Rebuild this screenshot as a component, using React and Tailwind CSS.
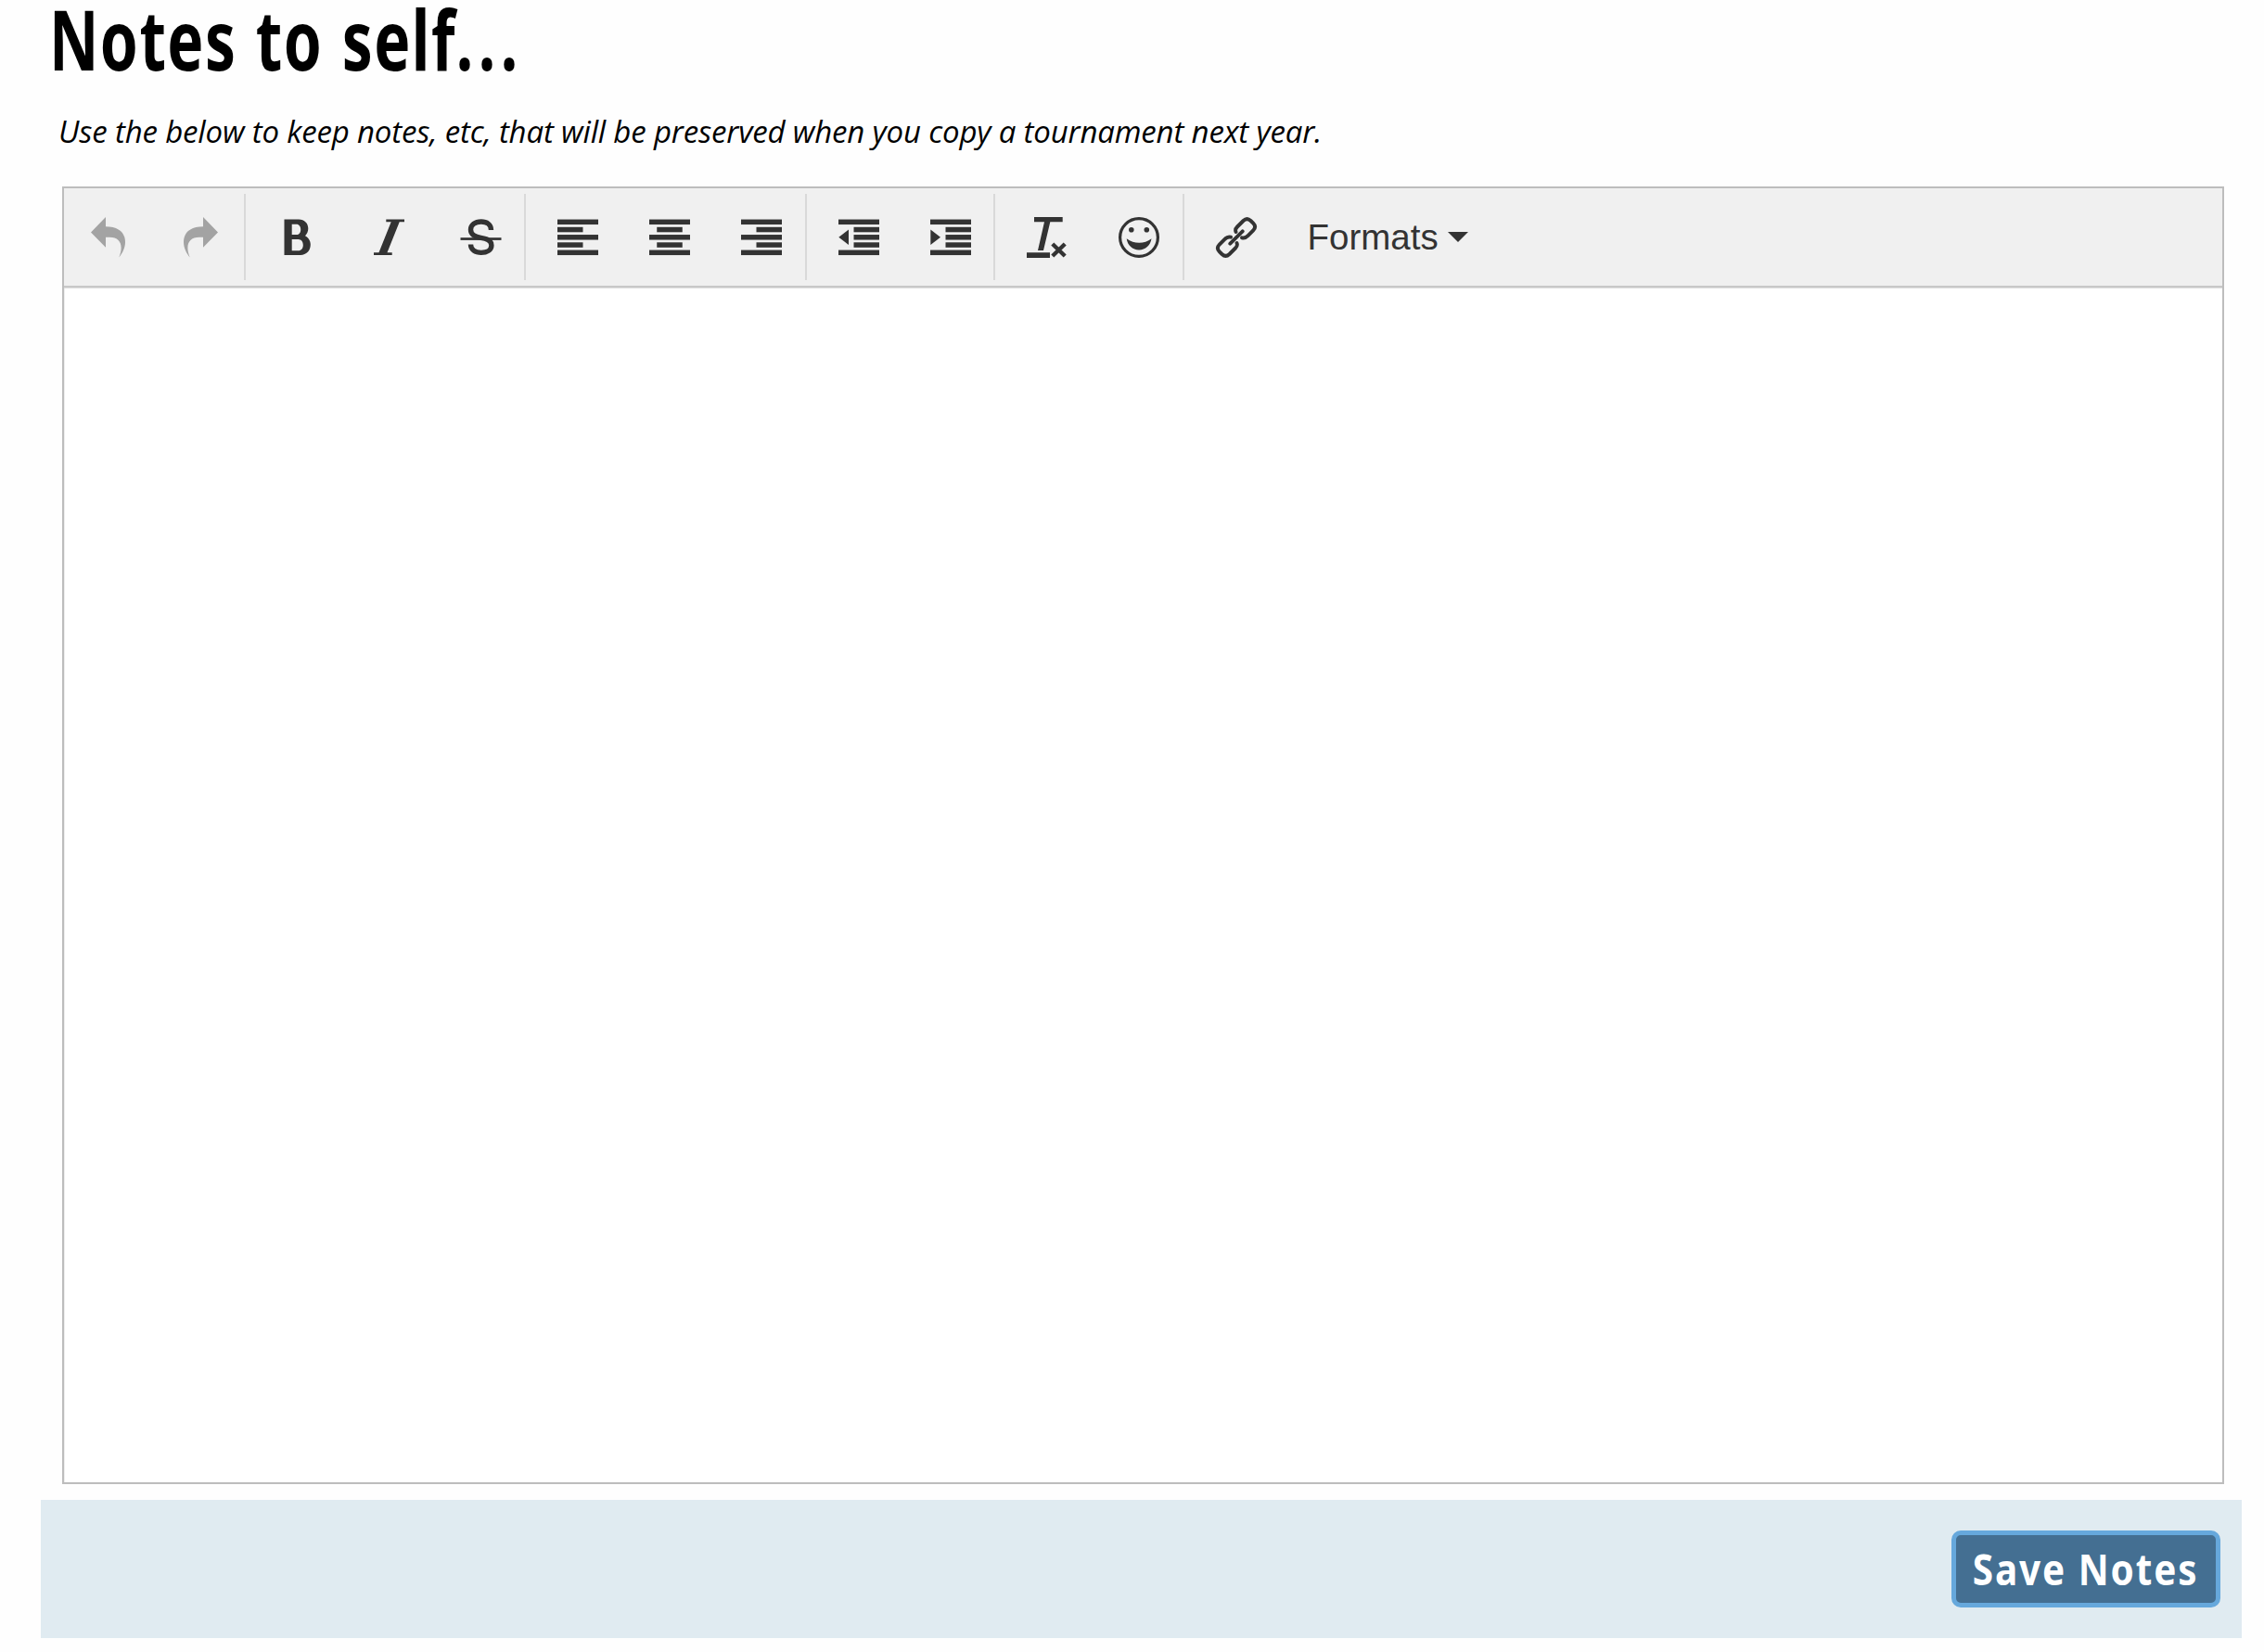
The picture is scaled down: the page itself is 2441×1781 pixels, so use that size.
import React from "react";

const Icon = ({ children, className = "text-[#333]" }) => (
  <button type="button" className={`block size-[44px] shrink-0 ${className}`}>
    <svg viewBox="0 0 44 44" className="block size-full overflow-visible" fill="currentColor">
      {children}
    </svg>
  </button>
);

const BAR_Y = [2.75, 11, 19.25, 27.5, 35.75];

// Five stacked text lines; `short` gives the left edge of the indented ones.
const Lines = ({ short, rows }) =>
  BAR_Y.map((y, i) => {
    const isShort = rows.includes(i);
    return <rect key={y} x={isShort ? short : 0} y={y - 0.2} width={isShort ? 27.5 : 44} height="5.5" />;
  });

const Group = ({ className, children }) => (
  <div className={`flex h-[93px] shrink-0 items-center gap-[55px] border-[#d9d9d9] ${className}`}>{children}</div>
);

const arrow = "M19 0V10.3C33 10.3 40 17 40 27C40 33 37 39 33.3 43.5C38 32 36 21.7 23 21.7H19V32.7L3 16.5Z";
const ring =
  "M21.5 16C20.4 13.5 21.3 12.2 23 10.5L29.5 4Q33.5 0.2 37.5 4L40.2 6.7Q44 10.5 40.2 14.5L34.5 20.2Q31.5 23.3 28 22.3";

export default function App() {
  return (
    <div className="flex h-[1781px] w-[2441px] flex-col bg-[#fefefe] font-['Open_Sans',sans-serif] text-black">
      <h1 className="h-[110px] pl-[53px] font-['Noto_Sans',sans-serif] text-[90px] leading-[82px] font-bold whitespace-nowrap">
        <span className="inline-block origin-left scale-x-[0.73] tracking-[2px] [word-spacing:2.5px]">
          Notes to self<span className="tracking-[7.5px]">...</span>
        </span>
      </h1>
      <p className="h-[91px] pl-[63px] text-[33px] leading-[64px] tracking-[-0.17px] whitespace-nowrap italic">
        Use the below to keep notes, etc, that will be preserved when you copy a tournament next year.
      </p>

      <section className="ml-[67px] flex h-[1399px] w-[2331px] flex-col border-2 border-[#bdbdbd] bg-white">
        <div className="flex h-[105px] shrink-0 items-center bg-[#f0f0f0]">
          <Group className="w-[196px] border-r-2 pl-[26px]">
            <Icon className="text-[#a3a3a3]">
              <path d={arrow} />
            </Icon>
            <Icon className="text-[#a3a3a3]">
              <path d={arrow} transform="matrix(-1 0 0 1 44 0)" />
            </Icon>
          </Group>
          <Group className="w-[302px] border-r-2 pl-[33px]">
            <Icon>
              <path
                fillRule="evenodd"
                d="M8.5 2.4H24C30.5 2.4 34.3 6.8 34.3 12.3C34.3 15.5 33 18.3 31 20.3C34.6 22.3 36.8 25.8 36.8 29.8C36.8 36.3 32.3 41 26 41H8.5ZM16.7 7.7V19H21.5C24.6 19 26.2 16.5 26.2 13.4C26.2 10.2 24.6 7.7 21.5 7.7ZM16.7 24V36.3H23.5C27 36.3 28.8 33.5 28.8 30.2C28.8 26.8 27 24 23.5 24Z"
              />
            </Icon>
            <Icon>
              <path d="M19.3 2.4H39V5.3H33.7L20.5 38.2H25.7V41H6V38.2H11.5L24.7 5.3H19.3Z" />
            </Icon>
            <Icon>
              <rect x="0.5" y="22.2" width="44" height="2.7" />
              <path
                transform="translate(0.5 0)"
                fill="none"
                stroke="currentColor"
                strokeWidth="5.4"
                d="M33 14C33 8 28.5 5 22.3 5C15.5 5 11 8.5 11 13.5C11 18.5 15 21.3 22 22.3C29.5 23.4 33.4 26 33.4 30.5C33.4 35.5 28.5 38.4 22.3 38.4C16 38.4 11 35.3 11 29.6"
              />
            </Icon>
          </Group>
          <Group className="w-[303px] border-r-2 pl-[34px]">
            <Icon><Lines short={0} rows={[1, 3]} /></Icon>
            <Icon><Lines short={8.25} rows={[1, 3]} /></Icon>
            <Icon><Lines short={16.5} rows={[1, 3]} /></Icon>
          </Group>
          <Group className="w-[203px] border-r-2 pl-[33.5px]">
            <Icon>
              <Lines short={16.5} rows={[1, 2, 3]} />
              <path d="M0.3 21.7L11 13.6V30Z" />
            </Icon>
            <Icon>
              <Lines short={16.5} rows={[1, 2, 3]} />
              <path d="M11 21.7L0.3 13.6V30Z" />
            </Icon>
          </Group>
          <Group className="w-[204px] border-r-2 pl-[34px]">
            <Icon>
              <path d="M8 0H38.7V5.3H25.3L18 36H12L19 5.3H8ZM0 38.3H25V44H0Z" />
              <path fill="none" stroke="currentColor" strokeWidth="4.4" d="M27.8 29L41.2 42M41.2 29L27.8 42" />
            </Icon>
            <Icon>
              <circle cx="22" cy="22" r="20.4" fill="none" stroke="currentColor" strokeWidth="3.2" />
              <circle cx="13.8" cy="13.8" r="2.8" />
              <circle cx="30.3" cy="13.8" r="2.8" />
              <path d="M8.7 23.3Q15 27.8 22.2 27.8T35.5 23.3C34.5 30.5 29 35.4 22.1 35.4S9.5 30.5 8.7 23.3Z" />
            </Icon>
          </Group>
          <div className="flex h-[93px] items-center pl-[33.5px]">
            <Icon>
              <g fill="none" stroke="currentColor" strokeWidth="3.9" strokeLinecap="round">
                <path d={ring} />
                <path d={ring} transform="rotate(180 22 22)" />
                <path d="M15.3 28.7L28.7 15.3" />
              </g>
            </Icon>
            <button
              type="button"
              className="ml-[55px] flex items-center gap-[10px] font-['Liberation_Sans',sans-serif] text-[38.5px] leading-[44px] text-[#333]"
            >
              Formats
              <svg viewBox="0 0 22 11" className="h-[11px] w-[22px]" fill="currentColor">
                <path d="M0 0H22L11 11Z" />
              </svg>
            </button>
          </div>
        </div>
        <div className="h-[3px] shrink-0 border-b border-[#dedede] bg-[#c8c8c8]" />
        <div className="grow border-l border-[#efefef] bg-white" />
      </section>

      <footer className="mt-[17px] ml-[44px] flex h-[149px] w-[2373px] items-center justify-end bg-[#e0ebf1] pr-[23px]">
        <button
          type="button"
          className="flex h-[83px] w-[290px] items-center justify-center rounded-[10px] border-[5px] border-[#66a8dc] bg-[#446f92] pb-[2px] font-['Noto_Sans',sans-serif] text-[46px] leading-none font-bold whitespace-nowrap text-white"
        >
          <span className="scale-x-[0.88] tracking-[2.2px]">Save Notes</span>
        </button>
      </footer>
    </div>
  );
}
